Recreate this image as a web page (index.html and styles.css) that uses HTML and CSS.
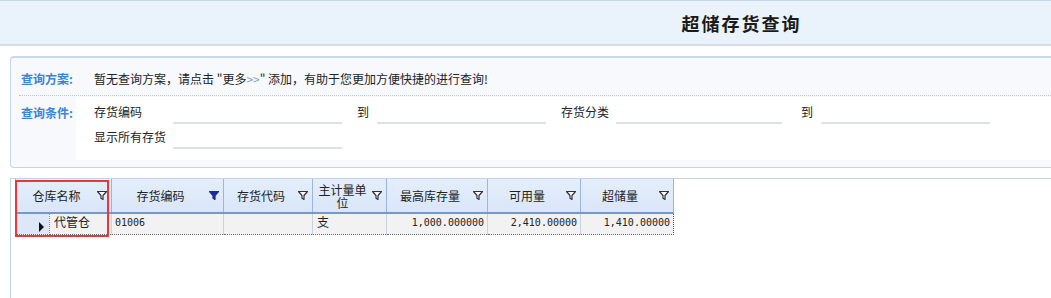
FILE: index.html
```html
<!DOCTYPE html>
<html lang="zh-CN">
<head>
<meta charset="utf-8">
<title>超储存货查询</title>
<link rel="stylesheet" href="styles.css">
</head>
<body>
<div class="page">
  <div class="titlebar"><h1 class="title">超储存货查询</h1></div>

  <div class="panel">
    <div class="plan-row">
      <span class="lbl">查询方案:</span>
      <span class="plan-text">暂无查询方案，请点击 "更多<span class="gt">&gt;&gt;</span>" 添加，有助于您更加方便快捷的进行查询!</span>
    </div>
    <div class="cond-row">
      <span class="lbl">查询条件:</span>
      <div class="cond-area">
        <div class="fields">
          <span class="flabel">存货编码</span>
          <span class="finput"></span>
          <span class="flabel to">到</span>
          <span class="finput"></span>
          <span class="flabel mid">存货分类</span>
          <span class="finput"></span>
          <span class="flabel to2">到</span>
          <span class="finput"></span>
          <span class="flabel">显示所有存货</span>
          <span class="finput"></span>
        </div>
      </div>
    </div>
  </div>

  <div class="gridwrap">
    <table class="grid">
      <colgroup>
        <col class="c-rh"><col class="c-wh"><col class="c-code"><col class="c-dm"><col class="c-unit"><col class="c-max"><col class="c-avail"><col class="c-over">
      </colgroup>
      <thead>
        <tr>
          <th colspan="2"><span class="th-text">仓库名称</span><svg class="funnel" viewBox="0 0 10 9"><path d="M0.5 0.5H9.5L6 4.5V8.5L4 7.3V4.5Z"/></svg></th>
          <th><span class="th-text">存货编码</span><svg class="funnel solid" viewBox="0 0 10 9"><path d="M0.5 0.5H9.5L6 4.5V8.5L4 7.3V4.5Z"/></svg></th>
          <th><span class="th-text">存货代码</span><svg class="funnel" viewBox="0 0 10 9"><path d="M0.5 0.5H9.5L6 4.5V8.5L4 7.3V4.5Z"/></svg></th>
          <th><span class="th-text wrap">主计量单位</span><svg class="funnel" viewBox="0 0 10 9"><path d="M0.5 0.5H9.5L6 4.5V8.5L4 7.3V4.5Z"/></svg></th>
          <th><span class="th-text">最高库存量</span><svg class="funnel" viewBox="0 0 10 9"><path d="M0.5 0.5H9.5L6 4.5V8.5L4 7.3V4.5Z"/></svg></th>
          <th><span class="th-text">可用量</span><svg class="funnel" viewBox="0 0 10 9"><path d="M0.5 0.5H9.5L6 4.5V8.5L4 7.3V4.5Z"/></svg></th>
          <th><span class="th-text">超储量</span><svg class="funnel" viewBox="0 0 10 9"><path d="M0.5 0.5H9.5L6 4.5V8.5L4 7.3V4.5Z"/></svg></th>
        </tr>
      </thead>
      <tbody>
        <tr>
          <td class="rowhead"><span class="arrow"></span></td>
          <td class="txt">代管仓</td>
          <td class="mono">01006</td>
          <td></td>
          <td class="txt">支</td>
          <td class="num">1,000.000000</td>
          <td class="num">2,410.00000</td>
          <td class="num last">1,410.00000</td>
        </tr>
      </tbody>
    </table>
    <div class="highlight"></div>
  </div>
</div>
</body>
</html>
```

FILE: styles.css
```css
html, body {
  margin: 0;
  padding: 0;
  overflow: hidden;
  background: #ffffff;
}
body {
  font-family: "Noto Sans CJK SC", "Noto Sans", sans-serif;
  font-size: 12px;
  color: #222;
}
.page {
  height: 298px;
  overflow: hidden;
}

/* title bar */
.titlebar {
  height: 43px;
  background: #eaf2fc;
  border-top: 1px solid #c6d6eb;
  border-bottom: 2px solid #d3deec;
  display: flex;
  align-items: center;
  justify-content: center;
  padding-left: 432px;
}
.title {
  margin: 0;
  font-size: 18px;
  font-weight: 700;
  letter-spacing: 2px;
  color: #1a1a1a;
  line-height: 1;
}

/* query panel */
.panel {
  margin: 10px 0 0 10px;
  border: 1px solid #c6d6ea;
  border-top: 2px solid #c9d8ea;
  border-right: none;
  border-radius: 4px 0 0 4px;
  background: #f7f9fd;
  padding: 0 0 7px 0;
}
.plan-row {
  display: flex;
  align-items: center;
  height: 38px;
  box-sizing: border-box;
  padding: 4px 0 0 2px;
  margin-left: 8px;
  border-bottom: 1px dotted #bfc6d0;
}
.lbl {
  width: 55px;
  flex: none;
  color: #3a84d8;
  font-weight: 700;
  font-size: 12px;
}
.plan-text {
  margin-left: 18px;
  color: #222;
}
.gt {
  color: #7fa0c8;
}
.cond-row {
  display: flex;
  align-items: flex-start;
  padding-left: 10px;
}
.cond-row .lbl {
  padding-top: 8px;
}
.cond-area {
  flex: 1;
  background: #ffffff;
  margin-top: 1px;
  padding: 2px 0 11px 18px;
}
.fields {
  display: grid;
  grid-template-columns: 79px 169px 35px 169px 70px 166px 39px 169px;
  grid-auto-rows: 25px;
}
.flabel {
  line-height: 25px;
  color: #222;
  white-space: nowrap;
}
.flabel.to, .flabel.mid {
  padding-left: 15px;
}
.flabel.to2 {
  padding-left: 19px;
}
.finput {
  border-bottom: 2px solid #dde1e7;
  height: 23px;
}

/* grid */
.gridwrap {
  position: relative;
  margin: 10px 0 0 10px;
  border-top: 1px solid #c3d3e8;
  border-left: 1px solid #c3d3e8;
  height: 130px;
  padding-left: 4px;
}
.grid {
  border-collapse: collapse;
  table-layout: fixed;
  width: 658px;
}
.c-rh { width: 34px; }
.c-wh { width: 62px; }
.c-code { width: 112px; }
.c-dm { width: 89px; }
.c-unit { width: 74px; }
.c-max { width: 101px; }
.c-avail { width: 93px; }
.c-over { width: 93px; }

.grid th {
  position: relative;
  height: 33px;
  padding: 0 16px 0 2px;
  background: linear-gradient(#e4eefc, #d9e6f8);
  border-right: 1px solid #9bb5dc;
  border-bottom: 2px solid #7497cf;
  font-weight: 400;
  font-size: 12px;
  color: #222;
  text-align: center;
  line-height: 13px;
}
.grid th:first-child {
  border-left: 1px solid #9bb5dc;
}
.th-text.wrap {
  display: inline-block;
  width: 50px;
  word-break: break-all;
}
.funnel {
  position: absolute;
  right: 4px;
  top: 12px;
  width: 10px;
  height: 9px;
}
.funnel path {
  fill: #ffffff;
  stroke: #333;
  stroke-width: 1.2;
  stroke-linejoin: round;
}
.funnel.solid path {
  fill: #1c2aa0;
  stroke: #1c2aa0;
}

.grid td {
  height: 20px;
  padding: 0 3px;
  background: #f2f2f2;
  border-right: 1px solid #c8d2e2;
  border-bottom: 1px dotted #6a6a6a;
  vertical-align: top;
  line-height: 16px;
  font-size: 12px;
  white-space: nowrap;
  overflow: hidden;
}
.grid td.rowhead {
  background: #dce8f8;
  border-left: 1px solid #b8c9e2;
  border-right: 1px dotted #8a8a8a;
  position: relative;
}
.arrow {
  position: absolute;
  left: 23px;
  top: 8px;
  width: 0;
  height: 0;
  border-top: 5px solid transparent;
  border-bottom: 5px solid transparent;
  border-left: 5px solid #111;
}
.grid td.txt {
  padding-left: 4px;
}
.grid td.mono, .grid td.num {
  font-family: "DejaVu Sans Mono", "Liberation Mono", monospace;
  font-size: 10px;
  line-height: 16px;
  padding-top: 1px;
  height: 19px;
}
.grid td.num {
  text-align: right;
}
.grid td.last {
  border-right: 1px dotted #555;
}

.highlight {
  position: absolute;
  left: 4px;
  top: 1px;
  width: 90px;
  height: 53px;
  border: 2px solid #e8383a;
  pointer-events: none;
}
```
